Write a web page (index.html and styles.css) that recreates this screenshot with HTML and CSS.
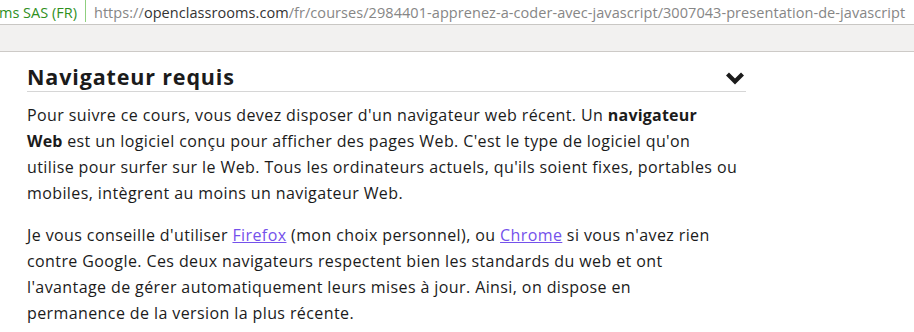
FILE: index.html
```html
<!DOCTYPE html>
<html lang="fr">
<head>
<meta charset="utf-8">
<title>Présentation de JavaScript</title>
<link rel="stylesheet" href="styles.css">
</head>
<body>
<div class="urlbar">
  <span class="identity">ms SAS (FR)</span>
  <span class="sep"></span>
  <span class="url"><span class="dim">https://</span>openclassrooms.com<span class="dim">/fr/courses/2984401-apprenez-a-coder-avec-javascript/3007043-presentation-de-javascript</span></span>
</div>
<div class="toolbar"></div>
<main class="content">
  <div class="section-head">
    <h2 class="title">Navigateur requis</h2>
    <svg class="chevron" width="20" height="14" viewBox="0 0 20 14"><polyline points="2.5,3 10,10.5 17.5,3" fill="none" stroke="#1b1b1b" stroke-width="4.2"/></svg>
  </div>
  <p class="para">Pour suivre ce cours, vous devez disposer d'un navigateur web récent. Un <b>navigateur</b><br><b>Web</b> est un logiciel conçu pour afficher des pages Web. C'est le type de logiciel qu'on<br>utilise pour surfer sur le Web. Tous les ordinateurs actuels, qu'ils soient fixes, portables ou<br>mobiles, intègrent au moins un navigateur Web.</p>
  <p class="para">Je vous conseille d'utiliser <a href="#">Firefox</a> (mon choix personnel), ou <a href="#">Chrome</a> si vous n'avez rien<br>contre Google. Ces deux navigateurs respectent bien les standards du web et ont<br>l'avantage de gérer automatiquement leurs mises à jour. Ainsi, on dispose en<br>permanence de la version la plus récente.</p>
</main>
</body>
</html>
```
FILE: styles.css
```css
html, body {
  margin: 0;
  padding: 0;
  background: #ffffff;
  overflow: hidden;
}
.urlbar {
  height: 24px;
  display: flex;
  align-items: center;
  border-bottom: 1px solid #c9c7c4;
  font-family: "Open Sans", "DejaVu Sans", sans-serif;
  font-size: 14.5px;
  white-space: nowrap;
  overflow: hidden;
}
.identity {
  color: #2f8f1d;
  margin-left: -1px;
}
.sep {
  width: 1px;
  height: 22px;
  align-self: flex-start;
  background: #8fcf7f;
  margin: 0 8px 0 8px;
}
.url {
  color: #333333;
  letter-spacing: 0.06px;
}
.url .dim {
  color: #868686;
}
.toolbar {
  height: 26px;
  background: #f2f1f0;
  border-bottom: 1px solid #cdcac7;
}
.content {
  width: 719px;
  padding: 0 0 0 27px;
  font-family: "Open Sans", sans-serif;
  color: #1b1b1b;
}
.section-head {
  display: flex;
  align-items: center;
  justify-content: space-between;
  border-bottom: 1px solid #d6d6d6;
  margin-top: 10px;
  height: 29px;
}
.title {
  margin: 0;
  font-size: 21.5px;
  font-weight: 700;
  letter-spacing: 0.85px;
}
.chevron {
  margin-right: 1px;
  margin-top: 3px;
}
.para {
  margin: 10px 0 0 0;
  font-size: 16px;
  line-height: 26px;
  letter-spacing: 0.4px;
  white-space: nowrap;
}
.para + .para {
  margin-top: 16px;
}
.para b {
  font-weight: 700;
  letter-spacing: 0.2px;
}
.para a {
  color: #7451eb;
  text-decoration: underline;
}
```
